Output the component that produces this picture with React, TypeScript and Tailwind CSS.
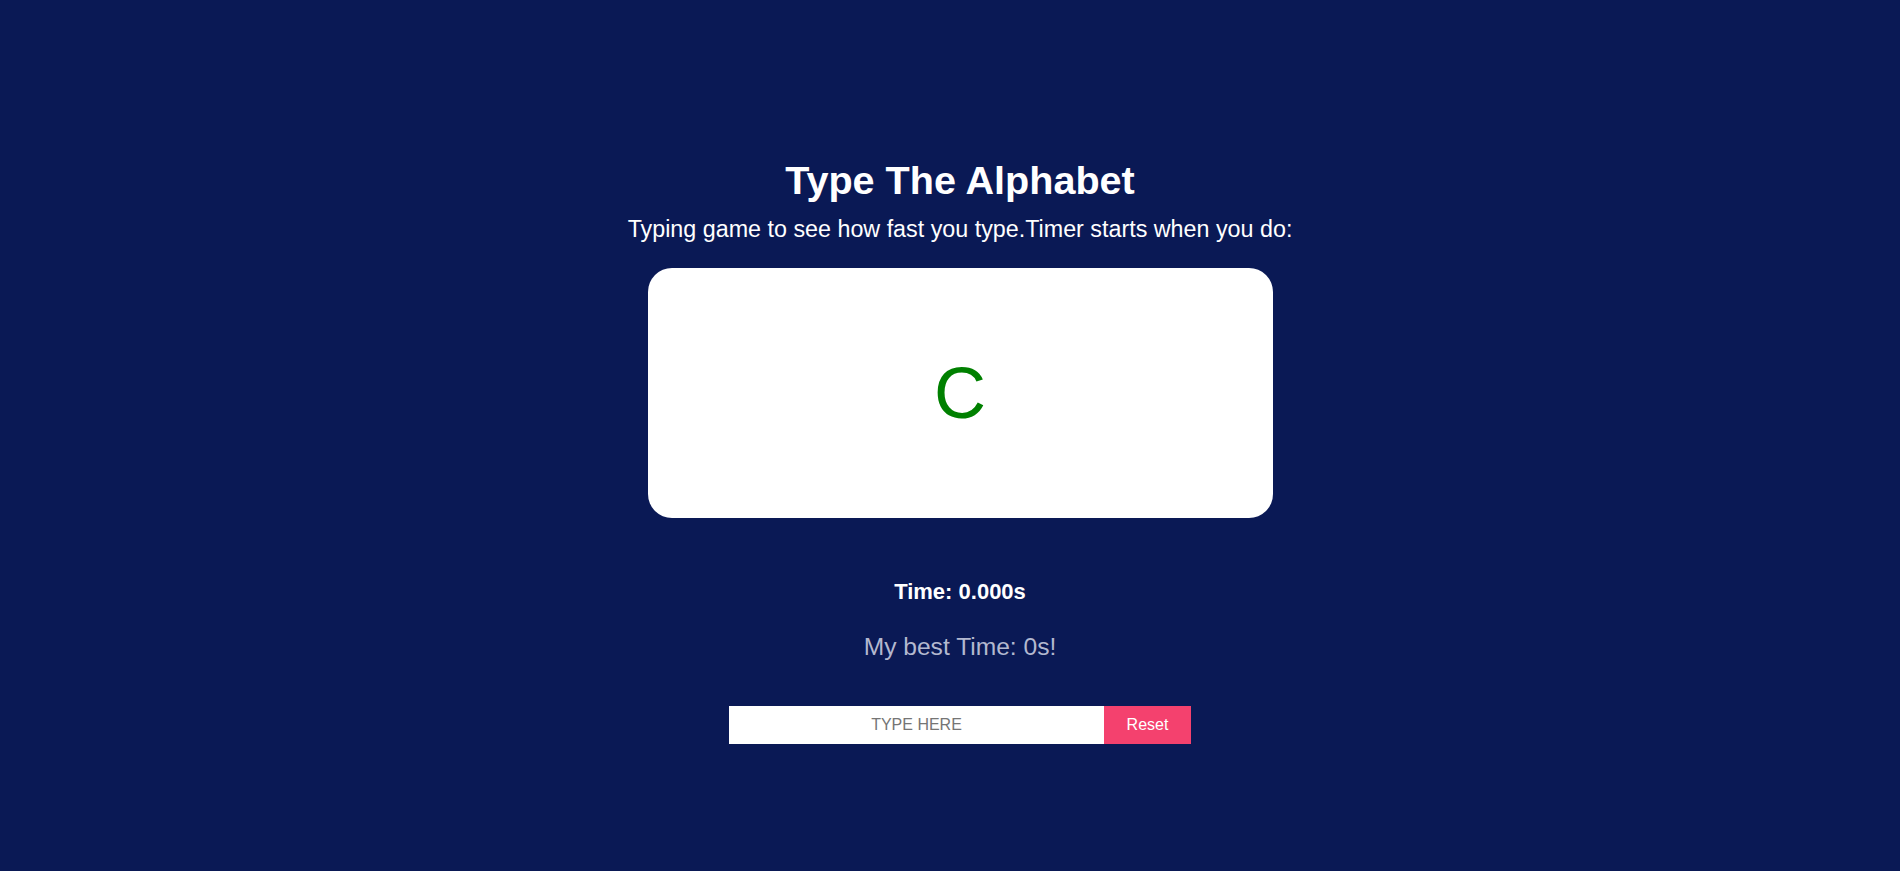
export default function App() {
    return (
        <div className="min-h-[871px] w-full bg-[#0a1955] font-['Liberation_Sans',Arial,sans-serif]">
            <div className="flex flex-col items-center pl-[20px] pt-[158px]">
                <h1 className="text-white text-[39.6px] leading-[45px] font-bold">Type The Alphabet</h1>
                <p className="mt-[13px] text-white text-[23.3px] leading-[27px]">
                    Typing game to see how fast you type.Timer starts when you do:
                </p>

                <div className="mt-[25px] w-[625px] h-[250px] bg-white rounded-[24px] flex items-center justify-center">
                    <span className="text-[#008000] text-[72px] leading-none">C</span>
                </div>

                <p className="mt-[61px] text-white text-[22px] leading-[26px] font-bold">Time: 0.000s</p>
                <p className="mt-[28px] text-[#b3b8cf] text-[24.6px] leading-[28px]">My best Time: 0s!</p>

                <div className="mt-[45px] flex">
                    <input
                        type="text"
                        placeholder="TYPE HERE"
                        className="w-[375px] h-[38px] bg-white text-center text-[16px] text-black placeholder:text-[#757575] outline-none"
                    />
                    <button className="w-[87px] h-[38px] bg-[#f4416e] text-white text-[16px]">Reset</button>
                </div>
            </div>
        </div>
    );
}
